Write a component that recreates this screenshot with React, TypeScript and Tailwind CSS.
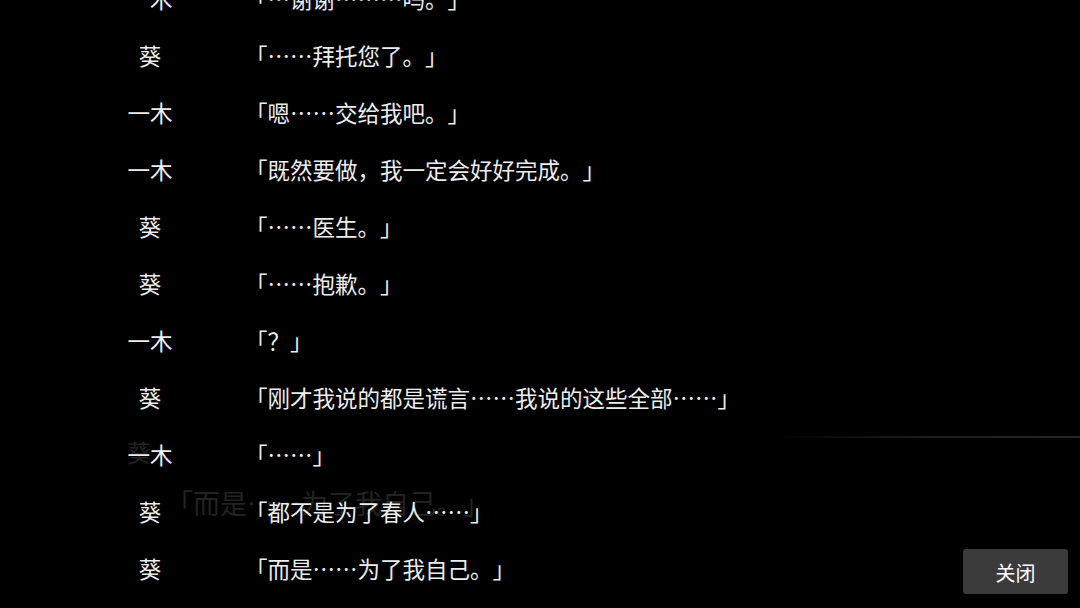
import React from 'react';

const lines: { name: string; text: string }[] = [
  { name: '一木', text: '「…谢谢………吗。」' },
  { name: '葵', text: '「……拜托您了。」' },
  { name: '一木', text: '「嗯……交给我吧。」' },
  { name: '一木', text: '「既然要做，我一定会好好完成。」' },
  { name: '葵', text: '「……医生。」' },
  { name: '葵', text: '「……抱歉。」' },
  { name: '一木', text: '「？」' },
  { name: '葵', text: '「刚才我说的都是谎言……我说的这些全部……」' },
  { name: '一木', text: '「……」' },
  { name: '葵', text: '「都不是为了春人……」' },
  { name: '葵', text: '「而是……为了我自己。」' },
];

export default function App() {
  return (
    <div className="relative w-[1080px] h-[608px] overflow-hidden bg-black font-['Noto_Sans_CJK_SC','Noto_Sans',sans-serif] [text-spacing-trim:space-all]">
      {/* faded message window behind the log */}
      <div className="absolute left-[775px] right-0 top-[436px] h-[2px] bg-gradient-to-r from-transparent via-[#1e1e1e] to-[#262626]" />
      <div className="absolute left-[127px] top-[440px] text-[24px] leading-none text-[#222222]">葵</div>
      <div className="absolute left-[166px] top-[489px] text-[27px] leading-none text-[#222222] whitespace-nowrap">「而是……为了我自己。」</div>

      <div className="relative flex flex-col justify-end h-full pb-[11px] text-[22.5px] text-[#ededed]">
        {lines.map((l, i) => (
          <div key={i} className="flex items-center h-[57px] shrink-0">
            <div className="w-[100px] ml-[100px] text-center">{l.name}</div>
            <div className="ml-[45px] whitespace-nowrap">{l.text}</div>
          </div>
        ))}
      </div>

      <button className="absolute right-[12px] bottom-[14px] w-[105px] h-[45px] rounded-[3px] bg-[#3b3b3b] text-[20px] text-white flex items-center justify-center pt-[2px]">
        关闭
      </button>
    </div>
  );
}
